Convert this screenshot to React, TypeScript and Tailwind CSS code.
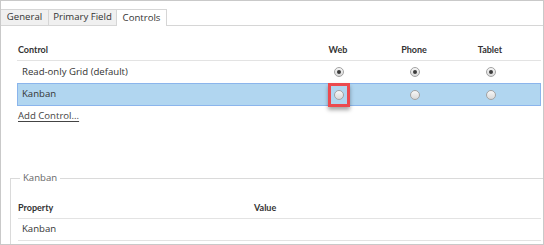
import React from "react";

const Radio = ({ checked }: { checked?: boolean }) => (
  <span className="flex h-[10px] w-[10px] items-center justify-center rounded-full border border-[#a3a3a3] bg-gradient-to-b from-[#f7f7f7] to-[#d9d9d9]">
    {checked && <span className="block h-[4px] w-[4px] rounded-full bg-[#3c3c3c]" />}
  </span>
);

const rows = [
  { name: "Read-only Grid (default)", checked: true, selected: false },
  { name: "Kanban", checked: false, selected: true },
];

export default function App() {
  return (
    <div
      className="flex h-[245px] w-[544px] flex-col overflow-hidden border border-[#c9c9c9] bg-white text-[9.6px] text-[#333]"
      style={{ fontFamily: '"Open Sans", "Noto Sans", sans-serif' }}
    >
      {/* tabs */}
      <div className="mt-[8px] flex h-[17px] items-stretch">
        <div className="flex w-[48px] items-center justify-center border-t border-r border-b border-[#d6d6d6] bg-[#f0f0f0]">General</div>
        <div className="flex w-[68px] items-center justify-center border-t border-r border-b border-[#d6d6d6] bg-[#f0f0f0]">Primary Field</div>
        <div className="flex w-[50px] items-center justify-center border-t border-r border-[#d6d6d6] bg-white">Controls</div>
        <div className="flex-1 border-b border-[#d6d6d6]" />
      </div>

      {/* controls table */}
      <div className="ml-[16px] mr-[2px] mt-[13px]">
        <div className="grid h-[22px] grid-cols-[283px_76px_76px_76px_1fr] items-center border-b border-[#e3e3e3] text-[9px] font-bold" style={{ fontFamily: "Lato, sans-serif" }}>
          <span className="pl-[1px]">Control</span>
          <span className="text-center">Web</span>
          <span className="text-center">Phone</span>
          <span className="text-center">Tablet</span>
          <span />
        </div>
        {rows.map((r) => (
          <div
            key={r.name}
            className={`grid grid-cols-[283px_76px_76px_76px_1fr] items-center ${
              r.selected ? "h-[23px] border border-[#8bb5ec] bg-[#b1d6f0]" : "h-[22px] border border-transparent"
            }`}
          >
            <span className="pl-[4px]">{r.name}</span>
            <span className="relative flex justify-center">
              <Radio checked={r.checked} />
              {r.selected && (
                <span className="absolute left-[27px] top-[-7px] h-[24px] w-[22px] border-[3px] border-[#ec4a4f] shadow-[0_3px_4px_rgba(0,0,0,0.35)]" />
              )}
            </span>
            <span className="flex justify-center">
              <Radio checked={r.checked} />
            </span>
            <span className="flex justify-center">
              <Radio checked={r.checked} />
            </span>
            <span />
          </div>
        ))}
        <div className="mt-[3px] pl-[1px] text-[#444] underline underline-offset-2">Add Control...</div>
      </div>

      {/* properties fieldset */}
      <fieldset className="ml-[9px] mt-[48px] flex-1 border-t border-l border-[#dadada] pl-[7px] pr-[2px]">
        <legend className="ml-[2px] px-[3px] text-[#666]">Kanban</legend>
        <div className="mt-[11px] grid h-[22px] grid-cols-[236px_1fr] items-center border-b border-[#e3e3e3] text-[9px] font-bold" style={{ fontFamily: "Lato, sans-serif" }}>
          <span>Property</span>
          <span>Value</span>
        </div>
        <div className="flex h-[22px] items-center border-b border-[#e3e3e3] pl-[4px]">Kanban</div>
      </fieldset>
    </div>
  );
}
